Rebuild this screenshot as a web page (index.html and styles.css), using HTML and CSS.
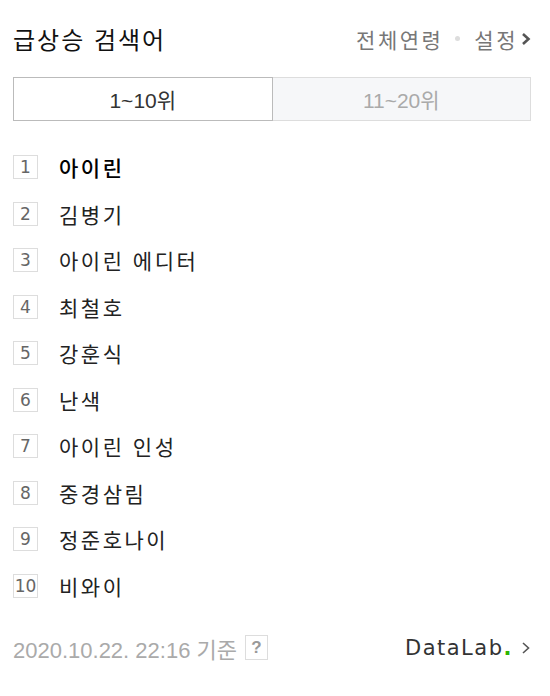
FILE: index.html
```html
<!DOCTYPE html>
<html lang="ko">
<head>
<meta charset="utf-8">
<link rel="stylesheet" href="styles.css">
</head>
<body>
<div class="wrap">
  <div class="head">
    <h1 class="title">급상승 검색어</h1>
    <div class="opts">
      <span class="opt">전체연령</span>
      <span class="dot"></span>
      <span class="opt">설정</span>
      <svg class="chev" width="10" height="14" viewBox="0 0 10 14"><path d="M2 2 L7.5 7 L2 12" fill="none" stroke="#555" stroke-width="2.6"/></svg>
    </div>
  </div>
  <div class="tabs">
    <div class="tab on">1~10위</div>
    <div class="tab">11~20위</div>
  </div>
  <ol class="list">
    <li class="row"><span class="num">1</span><span class="kw first">아이린</span></li>
    <li class="row"><span class="num">2</span><span class="kw">김병기</span></li>
    <li class="row"><span class="num">3</span><span class="kw">아이린 에디터</span></li>
    <li class="row"><span class="num">4</span><span class="kw">최철호</span></li>
    <li class="row"><span class="num">5</span><span class="kw">강훈식</span></li>
    <li class="row"><span class="num">6</span><span class="kw">난색</span></li>
    <li class="row"><span class="num">7</span><span class="kw">아이린 인성</span></li>
    <li class="row"><span class="num">8</span><span class="kw">중경삼림</span></li>
    <li class="row"><span class="num">9</span><span class="kw">정준호나이</span></li>
    <li class="row"><span class="num">10</span><span class="kw">비와이</span></li>
  </ol>
  <div class="foot">
    <div class="time">2020.10.22. 22:16 기준 <span class="help">?</span></div>
    <div class="lab"><span class="logo">DataLab<span class="g">.</span></span>
      <svg class="chev2" width="10" height="14" viewBox="0 0 10 14"><path d="M2 2 L7.5 7 L2 12" fill="none" stroke="#555" stroke-width="1.6"/></svg>
    </div>
  </div>
</div>
</body>
</html>
```
FILE: styles.css
```css
* { box-sizing: border-box; }
body { margin: 0; background: #fff; font-family: "Noto Sans CJK KR", "Noto Sans", sans-serif; }
.wrap { width: 550px; padding: 0 19px 0 13px; }
.head { display: flex; justify-content: space-between; align-items: center; height: 77px; padding-bottom: 0; }
.title { margin: 0; font-size: 24px; font-weight: 400; color: #111; line-height: 32px; letter-spacing: 2px; }
.opts { display: flex; align-items: center; color: #777; font-size: 21px; line-height: 28px; }
.opt { letter-spacing: 2.5px; }
.dot { width: 5px; height: 5px; border-radius: 50%; background: #ddd; margin: 0 14px 0 12px; }
.chev { margin-left: 3px; }
.tabs { display: flex; height: 44px; }
.tab { flex: 1; display: flex; align-items: center; justify-content: center; font-family: "Liberation Sans", "Noto Sans CJK KR", sans-serif; font-size: 21px; color: #aaa; background: #f6f7f9; border: 1px solid #ddd; border-left: 0; }
.tab.on { background: #fff; color: #333; border: 1px solid #bbb; }
.list { list-style: none; margin: 0; padding: 23px 0 0; }
.row { display: flex; align-items: center; height: 46.5px; }
.num { width: 25px; height: 24px; border: 1px solid #ddd; display: flex; align-items: center; justify-content: center; font-family: "DejaVu Sans", sans-serif; font-size: 17px; color: #666; }
.kw { margin-left: 21px; font-size: 21px; color: #222; line-height: 28px; letter-spacing: 2.5px; }
.kw.first { color: #000; font-weight: 500; }
.foot { display: flex; justify-content: space-between; align-items: center; margin-top: 25px; height: 27px; }
.time { display: flex; align-items: center; font-family: "Liberation Sans", "Noto Sans CJK KR", sans-serif; font-size: 22px; color: #aaa; }
.help { display: inline-flex; width: 23px; height: 25px; border: 1px solid #ddd; align-items: center; justify-content: center; margin-left: 8px; font-weight: 700; font-size: 17px; color: #999; }
.lab { display: flex; align-items: center; }
.logo { font-family: "DejaVu Sans", sans-serif; font-size: 21px; color: #333; letter-spacing: 1.5px; }
.g { color: #2db400; font-weight: 700; }
.chev2 { margin-left: 8px; }
```
